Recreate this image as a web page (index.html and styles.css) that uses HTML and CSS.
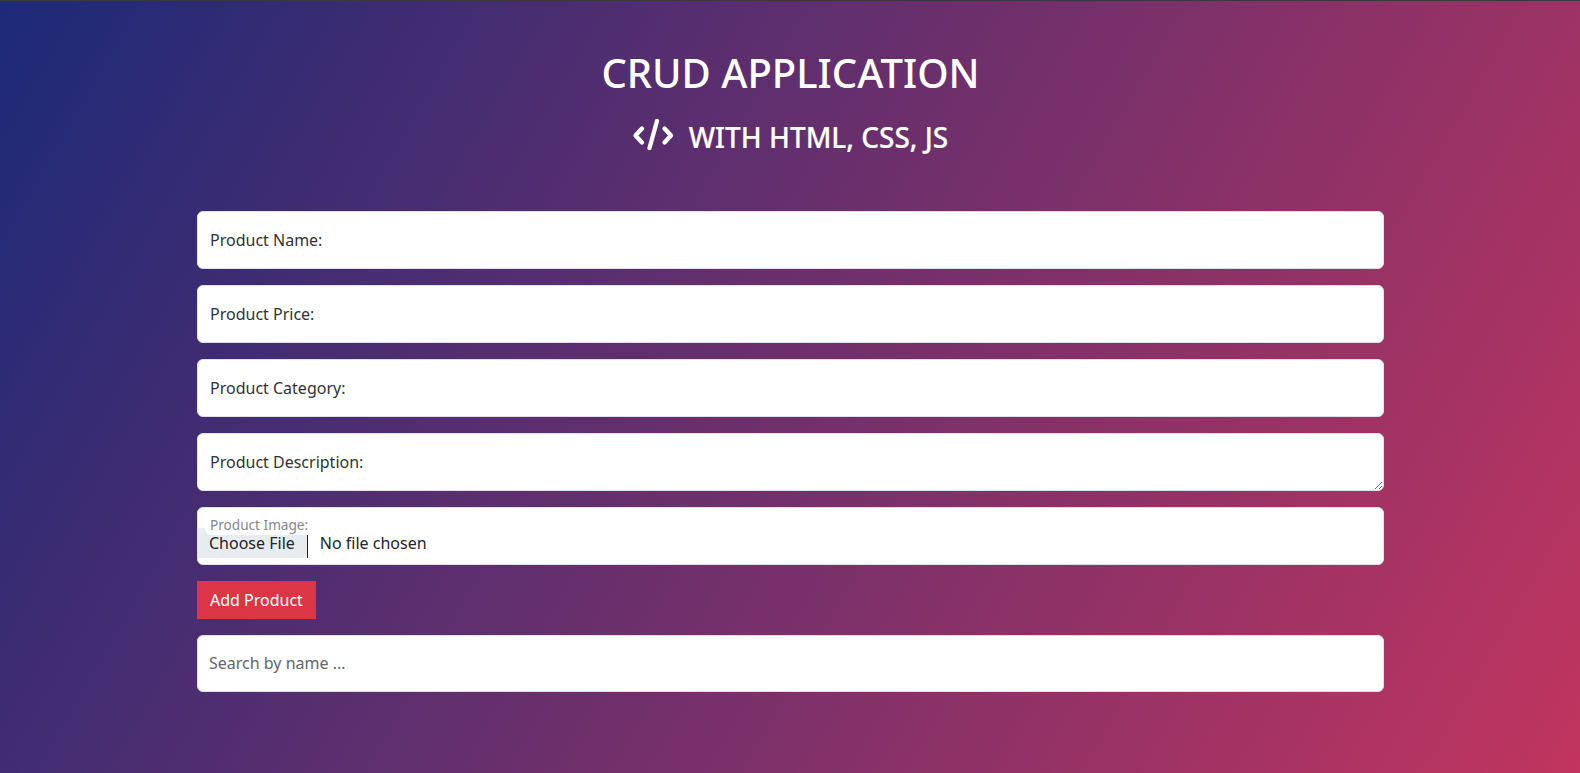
FILE: index.html
```html
<!DOCTYPE html>
<html lang="en">
<head>
    <meta charset="UTF-8">
    <meta name="viewport" content="width=device-width, initial-scale=1.0">
    <title>CRUD Application</title>
    <link rel="stylesheet" href="styles.css">
</head>
<body>
    <div class="page">
        <header class="header">
            <h1>CRUD APPLICATION</h1>
            <h2>
                <svg class="code-icon" viewBox="0 0 42 36" width="42" height="36" fill="none" stroke="#fff" stroke-width="4.300" stroke-linecap="round" stroke-linejoin="round">
                    <path d="M10 9.500 3.500 16.500 10 23.500"/>
                    <path d="M32.500 9.500l6.500 7-6.500 7"/>
                    <path d="M25 2 17.500 29"/>
                </svg>
                WITH HTML, CSS, JS
            </h2>
        </header>

        <form class="product-form">
            <div class="field">
                <input type="text" id="productName" class="control">
                <label for="productName">Product Name:</label>
            </div>
            <div class="field">
                <input type="text" id="productPrice" class="control">
                <label for="productPrice">Product Price:</label>
            </div>
            <div class="field">
                <input type="text" id="productCategory" class="control">
                <label for="productCategory">Product Category:</label>
            </div>
            <div class="field">
                <textarea id="productDescription" class="control"></textarea>
                <label for="productDescription">Product Description:</label>
            </div>
            <div class="field">
                <input type="file" id="productImage" class="control file-control">
                <label for="productImage" class="small-label">Product Image:</label>
            </div>
            <button type="button" class="add-btn">Add Product</button>
            <input type="text" class="control search" placeholder="Search by name ...">
        </form>
    </div>
</body>
</html>
```

FILE: styles.css
```css
* {
    box-sizing: border-box;
}
body {
    margin: 0;
    height: 773px;
    overflow: hidden;
    font-family: "Noto Sans", sans-serif;
    font-size: 16px;
    color: #212529;
    background: linear-gradient(120deg, #1c2a78 0%, #c1355f 100%);
    border-top: 1px solid #3a3a3a;
}
.page {
    width: 1187px;
    margin: 0 auto;
}
.header {
    text-align: center;
    color: #fff;
    padding-top: 44px;
}
h1 {
    margin: 0;
    padding-left: 1px;
    font-size: 40px;
    font-weight: 500;
    line-height: 56px;
}
h2 {
    margin: 16px 0 0;
    font-size: 28px;
    font-weight: 500;
    line-height: 40px;
    display: flex;
    justify-content: center;
    align-items: center;
    gap: 15px;
    -webkit-text-stroke: 0.2px #fff;
}
.product-form {
    margin-top: 54px;
    display: flex;
    flex-direction: column;
    gap: 16px;
    align-items: flex-start;
}
.field {
    position: relative;
    width: 100%;
}
.field label {
    position: absolute;
    left: 13.500px;
    top: 18px;
    line-height: 22px;
    font-size: 16px;
    color: #2f3337;
}
.control {
    display: block;
    width: 100%;
    height: 58px;
    padding: 16px 12px;
    border: 1px solid #dee2e6;
    border-radius: 6px;
    background: #fff;
    font-family: inherit;
    font-size: 16px;
    color: #212529;
    outline: none;
}
textarea.control {
    resize: vertical;
}
.file-control {
    padding: 20px 0 0;
    line-height: 30px;
}
.file-control::file-selector-button {
    height: 30px;
    margin: 0 12px 0 0;
    padding: 0 12px 0 11.500px;
    border: none;
    border-right: 1px solid #212529;
    border-radius: 0;
    background: #e9ecef;
    font-family: inherit;
    font-size: 16px;
    color: #212529;
}
.field .small-label {
    left: 8px;
    top: 1px;
    padding: 7px 5.500px 0;
    height: 27px;
    line-height: 20px;
    font-size: 13.600px;
    color: #83888d;
    background: #fff;
    border-radius: 6px;
}
.add-btn {
    height: 38px;
    padding: 0 13.500px;
    border: none;
    background: #dc3545;
    color: #fff;
    font-family: inherit;
    font-size: 16px;
}
.search {
    height: 57px;
    padding: 15px 11.500px 17px;
}
.search::placeholder {
    color: #63666a;
    opacity: 1;
}
```
